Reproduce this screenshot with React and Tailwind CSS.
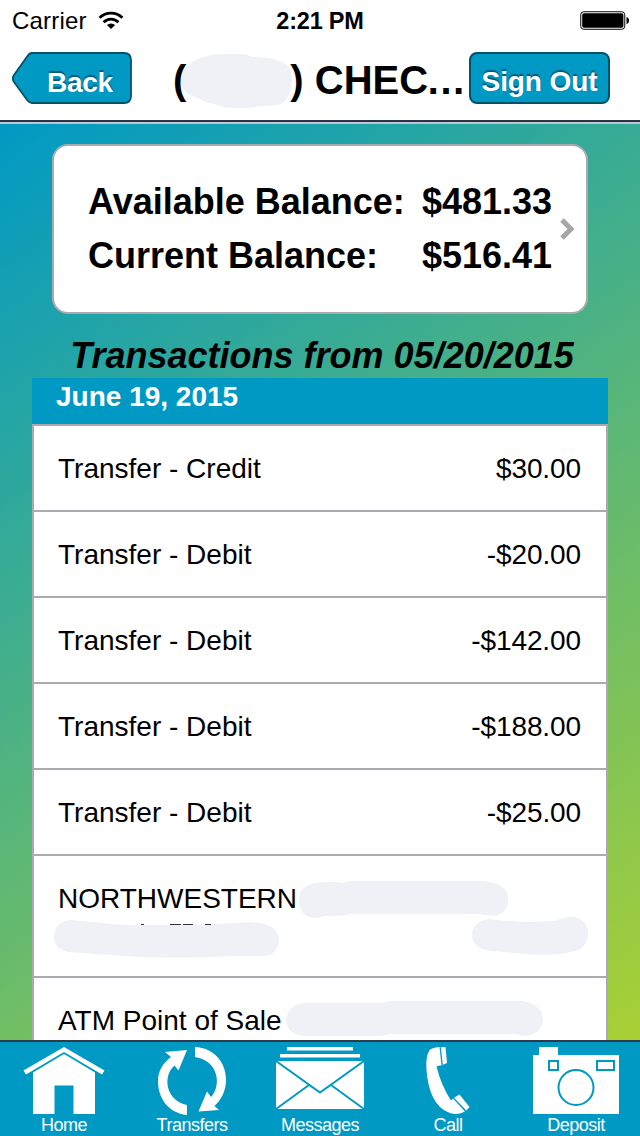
import React from "react";

const transactions = [
  { label: "Transfer - Credit", amount: "$30.00" },
  { label: "Transfer - Debit", amount: "-$20.00" },
  { label: "Transfer - Debit", amount: "-$142.00" },
  { label: "Transfer - Debit", amount: "-$188.00" },
  { label: "Transfer - Debit", amount: "-$25.00" },
];

function StatusBar() {
  return (
    <div className="grid h-10 grid-cols-3 items-center text-[24px] leading-[38px] text-black">
      <div className="flex items-center gap-[11px] pt-0.5 pl-3">
        <span className="tracking-[0.2px]">Carrier</span>
        <svg className="-mt-0.5 h-[19px] w-[26px]" viewBox="0 0 26 19">
          <g fill="none" stroke="#000" strokeWidth="2.8">
            <path d="M1.6 6.8a16.2 16.2 0 0 1 22.8 0" />
            <path d="M5.6 11.2a10.400 10.400 0 0 1 14.800 0" />
          </g>
          <path d="M8.900 14a6.1 6.1 0 0 1 8.200 0L13 18z" />
        </svg>
      </div>
      <span className="pt-0.5 text-center text-[23.5px] font-bold tracking-[-0.2px]">2:21 PM</span>
      <svg className="mr-[10px] h-[19px] w-[50px] justify-self-end" viewBox="0 0 50 19">
        <rect x=".75" y=".75" width="44" height="17.5" rx="3" fill="#fff" stroke="#000" strokeWidth="1" />
        <rect x="2.2" y="2.2" width="41.2" height="14.6" rx="1.8" />
        <path d="M46.5 6q2.5.5 2.5 3.5t-2.5 3.5z" />
      </svg>
    </div>
  );
}

function NavBar() {
  return (
    <div className="flex h-20 pt-3">
      <button className="relative ml-3 h-[52px] w-30 shrink-0">
        <svg className="absolute inset-0 h-full w-full" viewBox="0 0 120 52">
          <path
            d="M20 1H112Q119 1 119 8V44Q119 51 112 51H20Q17.500 51 15.500 48.500L2 30Q-.3 26.500 2 23L15.500 4Q17.500 1 20 1Z"
            fill="#0099c4"
            stroke="#005269"
            strokeWidth="1.800"
          />
        </svg>
        <span className="relative block pt-[9px] pl-[35px] text-left text-[28px] leading-[42px] font-bold tracking-[-0.3px] text-white [text-shadow:0_-2px_1px_#005a78]">
          Back
        </span>
      </button>
      <h1 className="relative ml-[41px] w-[296px] shrink-0 text-[40px] leading-[56px] font-bold whitespace-nowrap">
        (<span className="inline-block w-[104px]" />) CHEC<span className="-ml-0.5">…</span>
        <svg className="absolute top-0 left-[8px] h-[60px] w-[112px]" viewBox="0 0 112 60">
          <path
            d="M0 31C-1 18 9 8 26 4Q31 2 40 2H58Q67 2 71 5Q102 5 109 17C114 32 109 46 100 52Q95 54 78 54Q72 56 66 56H52Q42 56 33 52Q25 51 17 46Q1 41 0 31Z"
            fill="#eff1f7"
          />
        </svg>
      </h1>
      <button className="h-[52px] w-[141px] shrink-0 rounded-lg border-2 border-[#005269] bg-[#0099c4] text-[28px] font-bold tracking-[-0.1px] whitespace-nowrap text-white [text-shadow:0_-2px_1px_#005a78]">
        <span className="block pt-[7px] leading-[41px]">Sign Out</span>
      </button>
    </div>
  );
}

function BalanceCard() {
  return (
    <section className="mx-[52px] mt-5 flex h-[170px] items-center rounded-[16px] border-2 border-[#aaaab0] bg-white pl-[34px] text-[36px] leading-[54px] font-bold">
      <div className="grid grid-cols-[334px_130px] whitespace-nowrap">
        <span>Available Balance:</span>
        <span>$481.33</span>
        <span>Current Balance:</span>
        <span>$516.41</span>
      </div>
      <svg className="ml-2 h-6 w-4" viewBox="0 0 16 24">
        <path d="M2 3l9 9-9 9" fill="none" stroke="#a6a6a6" strokeWidth="5" />
      </svg>
    </section>
  );
}

function TransactionList() {
  return (
    <section className="mx-8">
      <h3 className="h-[46px] bg-[#0099c4] pl-6 text-[28px] leading-[38px] font-bold text-white">June 19, 2015</h3>
      <ul className="border-x-2 border-t-2 border-[#aaaab0] bg-white text-[28px]">
        {transactions.map((t, i) => (
          <li key={i} className="flex h-[86px] justify-between border-b-2 border-[#aaaab0] pr-[25px] pl-6 leading-[86px]">
            <span>{t.label}</span>
            <span className="tracking-[-0.1px]">{t.amount}</span>
          </li>
        ))}
        <li className="relative h-[122px] border-b-2 border-[#aaaab0] pl-6 leading-[86px]">
          <span>NORTHWESTERN</span>
          <svg className="absolute top-0 left-0 h-[120px] w-[572px]" viewBox="0 0 572 120">
            <g fill="#eff1f7">
              <path d="M280 27Q300 25 308 27Q313 25 320 25H446Q474 26 474 43Q474 60 457 60L446 58H315Q305 61 291 60Q277 65 270 58Q265 52 265 43Q265 31 280 27Z" />
              <path d="M36 64L68 67Q91 70 114 69H160L202 67Q243 63 245 83Q244 99 231 100H198Q135 104 75 99L34 96Q20 93 20 80Q21 66 36 64Z" />
              <path d="M456 63Q477 66 500 66L521 65Q534 60 540 61Q554 64 554 78Q553 94 537 96Q522 100 491 98L459 95Q438 94 438 78Q439 65 456 63Z" />
            </g>
            <path d="M107 68.500h3M136 68.500h11M149 68.500h10M171 68.500h6" stroke="#333" strokeWidth="1" />
          </svg>
        </li>
        <li className="relative h-[84px] pl-6 leading-[86px]">
          <span>ATM Point of Sale</span>
          <svg className="absolute top-0 left-0 h-[84px] w-[572px]" viewBox="0 0 572 84">
            <path
              d="M269 25H349Q351 23 360 23H488Q509 26 509 42Q507 58 488 58L483 56H355Q351 58 340 58H269Q253 56 252 42Q253 28 269 25Z"
              fill="#eff1f7"
            />
          </svg>
        </li>
      </ul>
    </section>
  );
}

function HomeIcon() {
  return (
    <svg className="h-[70px] w-full" viewBox="0 0 128 70" fill="#fff">
      <path d="M64 1L104.500 24.500L102 28.500L64 6L26 28.500L23.500 24.500Z" />
      <path d="M64 8L95 26.500V68H73.500V39.500H54.500V68H33V26.500Z" />
    </svg>
  );
}

function TransfersIcon() {
  return (
    <svg className="h-[70px] w-full" viewBox="0 0 128 70" fill="#fff">
      <path d="M37 6L59 4L50.500 24.500L46.500 19.500C34 30 38 55 59 59V69C40 67 30 52 30 35C30 25 35 17 43 11Z" />
      <path d="M67 1C86 2 98 16 98 34C98 45 93 54 86.500 60L91 64L70.500 65.500L79 45.500L83 51C93 41 92 15 67 11Z" />
    </svg>
  );
}

function MessagesIcon() {
  return (
    <svg className="h-[70px] w-full" viewBox="0 0 128 70">
      <path d="M31 1H97V4.500H31ZM24 8H104V11.500H24ZM20 15H108V63H20Z" fill="#fff" />
      <path d="M20 15L64 46.500L108 15M20 63L53 39M108 63L75 39" fill="none" stroke="#0099c4" strokeWidth="2" />
    </svg>
  );
}

function CallIcon() {
  return (
    <svg className="h-[70px] w-full" viewBox="0 0 128 70" fill="#fff">
      <path d="M55.500 1Q50 1 46 3.500Q42 9 42.300 20C43 40 49 57 60 64Q66 68 72 68Q77 67.500 81 65.500L69 52.500L67 54.500Q57 39 52.500 20.500Q55 19 57.500 19.500Z" />
      <path d="M56.800 1H61.500L63 17L58.800 18.800Z" />
      <path d="M70 51.800L75.500 48.500L85.500 61L82.300 64.500Z" />
    </svg>
  );
}

function DepositIcon() {
  return (
    <svg className="h-[70px] w-full" viewBox="0 0 128 70">
      <path d="M21 9H27V1H46V9H107V68H21Z" fill="#fff" />
      <g fill="none" stroke="#0099c4" strokeWidth="2">
        <rect x="37" y="15" width="9" height="9" />
        <rect x="85" y="15" width="17" height="9" />
        <circle cx="64" cy="41.500" r="17.500" />
      </g>
    </svg>
  );
}

const tabs = [
  { label: "Home", Icon: HomeIcon },
  { label: "Transfers", Icon: TransfersIcon },
  { label: "Messages", Icon: MessagesIcon },
  { label: "Call", Icon: CallIcon },
  { label: "Deposit", Icon: DepositIcon },
];

function TabBar() {
  return (
    <nav className="grid h-24 shrink-0 grid-cols-5 border-t-2 border-[#2d3b4b] bg-[#0099c4] pt-[4px] text-white">
      {tabs.map(({ label, Icon }) => (
        <a key={label} className="flex flex-col items-center">
          <Icon />
          <span className="-mt-px text-[18px] leading-5 tracking-[-0.5px]">{label}</span>
        </a>
      ))}
    </nav>
  );
}

export default function App() {
  return (
    <div className="flex h-[1136px] w-[640px] flex-col overflow-hidden bg-white font-['Liberation_Sans',Arial,sans-serif] text-black">
      <header className="h-[124px] shrink-0 border-b-2 border-[#bdc7d2]">
        <div className="h-[122px] border-b-2 border-[#2d344a]">
          <StatusBar />
          <NavBar />
        </div>
      </header>
      <main className="min-h-0 flex-1 overflow-hidden bg-[linear-gradient(145deg,#0099c4,#a9d035)]">
        <BalanceCard />
        <h2 className="mt-[20px] h-11 pl-1 text-center text-[36px] leading-[44px] font-bold whitespace-nowrap italic">
          Transactions from 05/20/2015
        </h2>
        <TransactionList />
      </main>
      <TabBar />
    </div>
  );
}
